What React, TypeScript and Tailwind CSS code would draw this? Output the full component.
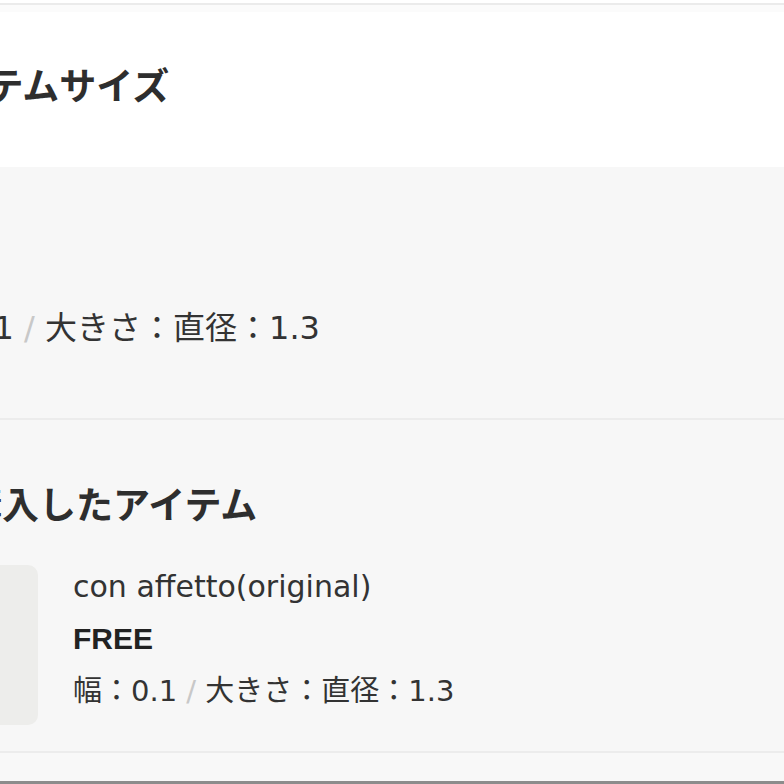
import React from "react";

const jp = "font-['DejaVu_Sans',_'Noto_Sans_CJK_JP',_sans-serif]";

function SizeText({ big }: { big?: boolean }) {
  return (
    <span className={big ? "text-[32px]" : "text-[29px]"}>
      幅：0.1<span className="text-[#c8c8c8]"> / </span>大きさ：直径：1.3
    </span>
  );
}

export default function App() {
  return (
    <div className={`w-[784px] h-[784px] overflow-hidden bg-[#f7f7f7] ${jp}`}>
      {/* Header */}
      <div className="h-[167px] bg-white">
        <div className="h-[3px] bg-white" />
        <div className="h-[2px] bg-[#ebebeb]" />
        <div className="h-[7px] bg-[#fbfbfb]" />
        <h1 className="mt-[54px] ml-[-85px] whitespace-nowrap text-[37px] leading-[44px] font-bold text-[#2e2e2e]">
          アイテムサイズ
        </h1>
      </div>

      {/* Size section */}
      <div className="box-border h-[253px] border-b-2 border-[#ececec] pt-[141px]">
        <p className="ml-[-101px] whitespace-nowrap leading-[40px] text-[#333]">
          <SizeText big />
        </p>
      </div>

      {/* Purchased items */}
      <div className="border-b-2 border-[#ececec] pt-[65px] pb-[26px]">
        <h2 className="ml-[-35px] whitespace-nowrap text-[37px] leading-[44px] font-bold text-[#2e2e2e]">
          購入したアイテム
        </h2>
        <div className="mt-[36px] ml-[-122px] flex items-start gap-[35px]">
          <div className="w-[160px] h-[160px] shrink-0 rounded-[10px] bg-[#ededeb]" />
          <div className="-mt-[4px] flex flex-col whitespace-nowrap text-[30px] leading-[52px] text-[#333]">
            <span>con affetto(original)</span>
            <span className="font-['Liberation_Sans',_sans-serif] font-bold text-[#222]">FREE</span>
            <SizeText />
          </div>
        </div>
      </div>

      <div className="h-[28px] bg-[#f8f8f8]" />
      <div className="h-[3px] bg-[#8c8c8c]" />
    </div>
  );
}
